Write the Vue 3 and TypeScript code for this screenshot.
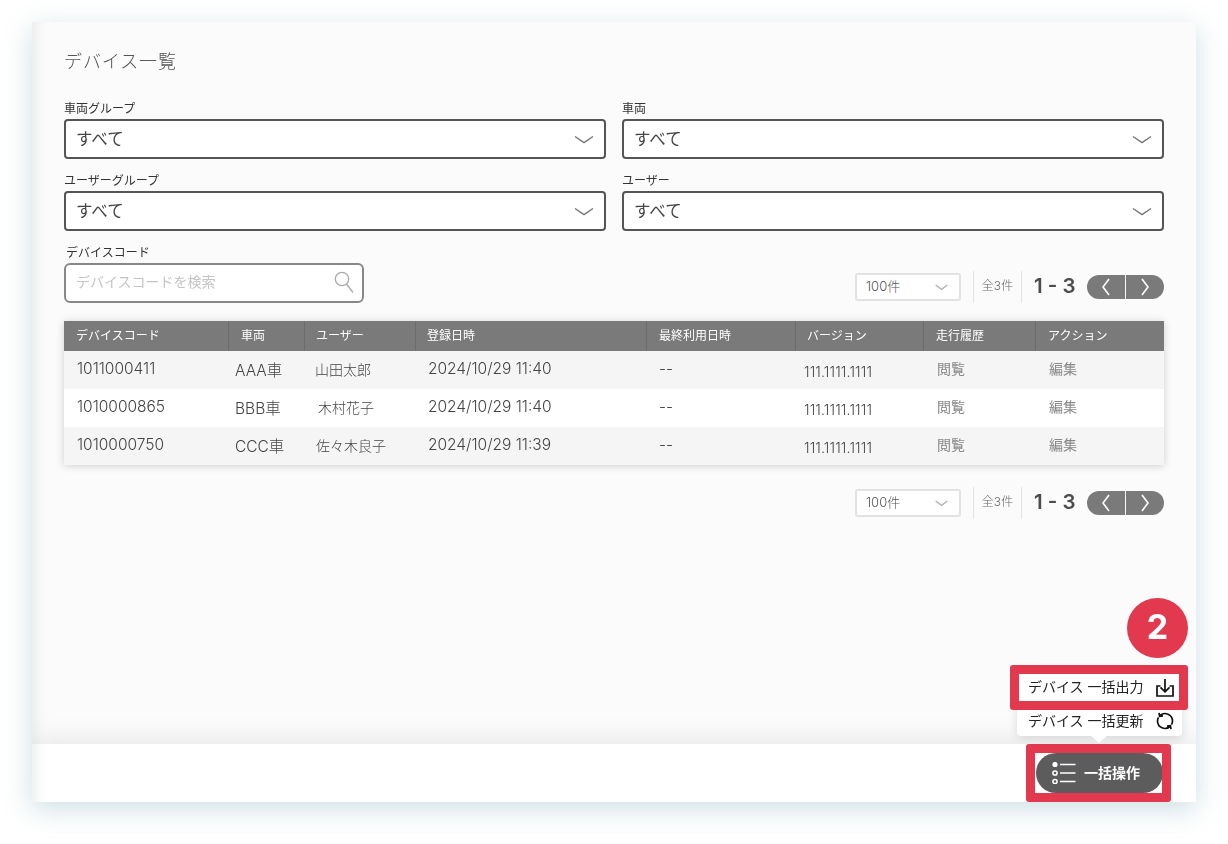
<script setup lang="ts">
interface Row { code: string; car: string; user: string; date: string; userClass: string }
const rows: Row[] = [
  { code: '1011000411', car: 'AAA車', user: '山田太郎', date: '2024/10/29 11:40', userClass: 'u0' },
  { code: '1010000865', car: 'BBB車', user: '木村花子', date: '2024/10/29 11:40', userClass: 'u1' },
  { code: '1010000750', car: 'CCC車', user: '佐々木良子', date: '2024/10/29 11:39', userClass: 'u2' },
]
const headers = ['デバイスコード', '車両', 'ユーザー', '登録日時', '最終利用日時', 'バージョン', '走行履歴', 'アクション']
const filters = ['車両グループ', '車両', 'ユーザーグループ', 'ユーザー']
</script>

<template>
  <div class="page">
    <div class="card">
      <main class="main">
        <h1 class="title">デバイス一覧</h1>
        <div class="filters">
          <div v-for="f in filters" :key="f" class="field">
            <label class="label">{{ f }}</label>
            <div class="select">
              <span class="value">すべて</span>
              <svg class="chev" width="20" height="10" viewBox="0 0 20 10" fill="none"><path d="M1 1.5 10 7.5 19 1.5" stroke="#777" stroke-width="1.5" /></svg>
            </div>
          </div>
        </div>
        <div class="search-row">
          <div class="field search-field">
            <label class="label code-label">デバイスコード</label>
            <div class="search">
              <span class="ph">デバイスコードを検索</span>
              <svg class="glass" width="20" height="24" viewBox="0 0 20 24" fill="none" stroke="#aaa" stroke-width="1.3"><circle cx="8" cy="9" r="6.7" /><path d="M12.5 14 19 22.5" /></svg>
            </div>
          </div>
          <div class="pager pager-top">
            <div class="size"><span class="size-text">100件</span><svg width="13" height="7" viewBox="0 0 13 7" fill="none"><path d="M.7 1 6.5 5.500 12.300 1" stroke="#aaa" stroke-width="1.2" /></svg></div>
            <div class="total">全3件</div>
            <div class="range">1 - 3</div>
            <div class="nav">
              <span class="nav-btn"><svg width="10" height="18" viewBox="0 0 10 18" fill="none"><path d="M8 1 2 9l6 8" stroke="#fff" stroke-width="1.6" /></svg></span>
              <span class="nav-btn"><svg width="10" height="18" viewBox="0 0 10 18" fill="none"><path d="M2 1l6 8-6 8" stroke="#fff" stroke-width="1.6" /></svg></span>
            </div>
          </div>
        </div>
        <div class="table">
          <div class="thead">
            <div v-for="(h, i) in headers" :key="h" class="th" :class="'h' + i">{{ h }}</div>
          </div>
          <div v-for="r in rows" :key="r.code" class="tr">
            <div class="td c0">{{ r.code }}</div>
            <div class="td c1">{{ r.car }}</div>
            <div class="td c2" :class="r.userClass">{{ r.user }}</div>
            <div class="td c3">{{ r.date }}</div>
            <div class="td c4">--</div>
            <div class="td c5">111.1111.1111</div>
            <div class="td c6">閲覧</div>
            <div class="td c7">編集</div>
          </div>
        </div>
        <div class="pager pager-bottom">
          <div class="size"><span class="size-text">100件</span><svg width="13" height="7" viewBox="0 0 13 7" fill="none"><path d="M.7 1 6.5 5.500 12.300 1" stroke="#aaa" stroke-width="1.2" /></svg></div>
          <div class="total">全3件</div>
          <div class="range">1 - 3</div>
          <div class="nav">
            <span class="nav-btn"><svg width="10" height="18" viewBox="0 0 10 18" fill="none"><path d="M8 1 2 9l6 8" stroke="#fff" stroke-width="1.6" /></svg></span>
            <span class="nav-btn"><svg width="10" height="18" viewBox="0 0 10 18" fill="none"><path d="M2 1l6 8-6 8" stroke="#fff" stroke-width="1.6" /></svg></span>
          </div>
        </div>
      </main>
      <footer class="footer">
        <button class="bulk" type="button">
          <svg width="24" height="22" viewBox="0 0 24 22" fill="none" stroke="#fff" stroke-width="1.5">
            <circle cx="3" cy="2.500" r="2.600" fill="#fff" stroke="none" />
            <circle cx="3" cy="11" r="2.100" />
            <circle cx="3" cy="19.500" r="2.100" />
            <path d="M8 2.500h15.500M8 11h15.500M8 19.500h15.500" />
          </svg>
          <span class="bulk-text">一括操作</span>
          <i class="mark mark-btn"></i>
        </button>
      </footer>

      <div class="menu">
        <div class="menu-item first">
          <span class="item-text">デバイス 一括出力</span>
          <svg width="18" height="18" viewBox="0 0 18 18" fill="none" stroke="#111" stroke-width="1.7"><path d="M4.500 7H1v10h16V7h-3.500" /><path d="M9 0v12.500M4.500 8.300 9 12.800l4.500-4.500" /></svg>
          <i class="mark mark-item"></i>
        </div>
        <div class="menu-item second">
          <span class="item-text">デバイス 一括更新</span>
          <svg width="18" height="18" viewBox="0 0 18 18" fill="none" stroke="#111" stroke-width="1.7"><path d="M4 3.500A7.500 7.500 0 0 1 16.500 9a7.500 7.500 0 0 1-1 3.700" /><path d="M14 14.500A7.500 7.500 0 0 1 1.500 9a7.500 7.500 0 0 1 1-3.700" /><path d="M3 .8l.6 3.400L7 3.800M15 17.200l-.6-3.400-3.400.4" /></svg>
        </div>
        <div class="arrow"></div>
      </div>
      <div class="badge">2</div>
    </div>
  </div>
</template>

<style>
html, body { margin: 0; background: #fff; }
</style>

<style scoped>
.page {
  box-sizing: border-box;
  width: 1228px;
  height: 844px;
  padding: 22px 32px 42px;
  font-family: Inter, "Noto Sans CJK JP", sans-serif;
  color: #4f4f4f;
  overflow: hidden;
  will-change: opacity;
}
.card {
  position: relative;
  height: 780px;
  display: flex;
  flex-direction: column;
  background: #fbfbfb;
  box-shadow: 0 7px 26px rgba(90, 150, 168, .3), inset 16px 0 14px -12px rgba(0, 0, 0, .07);
  overflow: clip;
  overflow-clip-margin: 0;
}
.main { flex: 1; padding: 0 32px; }
.title {
  margin: 0;
  padding-top: 27px;
  font-size: 18px;
  line-height: 25px;
  font-weight: 300;
  letter-spacing: .9px;
  color: #555;
}
.filters {
  margin-top: 25px;
  display: grid;
  grid-template-columns: 1fr 1fr;
  column-gap: 16px;
  row-gap: 12px;
}
.field { display: flex; flex-direction: column; }
.label {
  height: 20px;
  line-height: 20px;
  font-size: 12px;
  color: #333;
}
.code-label { padding-left: 2px; }
.select {
  box-sizing: border-box;
  height: 40px;
  background: #fff;
  border: 2px solid #555;
  border-radius: 4px;
  padding: 0 10px;
  display: flex;
  align-items: center;
  justify-content: space-between;
  font-size: 16.5px;
  color: #444;
}
.value { margin-top: -3px; }
.chev { margin-top: 2px; }
.search-row {
  margin-top: 12px;
  display: flex;
  justify-content: space-between;
  align-items: flex-end;
}
.search-field { width: 300px; }
.search {
  box-sizing: border-box;
  height: 40px;
  background: #fff;
  border: 2px solid #888;
  border-radius: 6px;
  padding: 0 8px 0 10px;
  display: flex;
  align-items: center;
  justify-content: space-between;
  font-size: 14px;
  color: #c4c4c4;
}
.ph { margin-top: -4px; }
.glass { margin-top: -2px; }
.pager {
  display: flex;
  align-items: center;
  height: 32px;
}
.pager-bottom { margin-top: 22px; justify-content: flex-end; }
.size {
  box-sizing: border-box;
  width: 106px;
  height: 28px;
  background: #fff;
  border: 2px solid #e2e2e2;
  border-radius: 3px;
  padding: 0 11px 0 9px;
  display: flex;
  align-items: center;
  justify-content: space-between;
  font-size: 13px;
  font-weight: 300;
  color: #555;
}
.size-text { margin-top: -3px; }
.total {
  margin-left: 12px;
  width: 49px;
  height: 32px;
  box-sizing: border-box;
  border-left: 1px solid #e2e2e2;
  border-right: 1px solid #e2e2e2;
  text-align: center;
  line-height: 30px;
  font-size: 12px;
  font-weight: 300;
  color: #666;
}
.range {
  margin-left: 12px;
  width: 53px;
  font-size: 20.5px;
  font-weight: 600;
  color: #4c4c4c;
  white-space: nowrap;
  margin-top: -3px;
}
.nav {
  width: 77px;
  height: 24px;
  display: flex;
  gap: 1px;
  border-radius: 12px;
  overflow: hidden;
}
.nav-btn {
  flex: 1;
  background: #7a7a7a;
  display: flex;
  align-items: center;
  justify-content: center;
}
.table {
  margin-top: 18px;
  box-shadow: 0 1px 8px rgba(0, 0, 0, .18);
}
.thead, .tr {
  display: grid;
  grid-template-columns: 164px 76px 111px 231px 149px 128px 112px 129px;
}
.thead { height: 30px; background: #7a7a7a; }
.th {
  line-height: 29px;
  font-size: 12px;
  color: #fff;
  padding-left: 12px;
  border-left: 1px solid #6c6c6c;
}
.th:first-child { border-left: none; }
.h2, .h3, .h5 { padding-left: 11px; }
.tr { height: 38px; background: #f5f5f5; align-items: center; font-size: 15.5px; font-weight: 300; color: #444; }
.tr:nth-child(odd) { background: #fff; }
.td { padding-left: 13px; white-space: nowrap; margin-top: -4px; }
.c1 { padding-left: 7px; margin-top: -3px; }
.c2 { margin-top: -3px; font-size: 14px; }
.u0 { padding-left: 11px; }
.u1 { padding-left: 14px; }
.u2 { padding-left: 12px; }
.c5 { padding-left: 9px; margin-top: 3px; font-size: 14px; letter-spacing: .15px; }
.c6, .c7 { color: #888; padding-left: 14px; font-size: 14px; margin-top: -5px; font-weight: 400; }
.footer {
  height: 58px;
  background: #fff;
  box-shadow: 0 0 30px rgba(0, 0, 0, .11), inset 16px 0 14px -12px rgba(0, 0, 0, .07);
  display: flex;
  justify-content: flex-end;
  padding: 9px 33px 0 0;
  box-sizing: border-box;
  position: relative;
}
.bulk {
  position: relative;
  box-sizing: border-box;
  width: 127px;
  height: 40px;
  border: none;
  border-radius: 20px;
  background: #5c5c5c;
  color: #fff;
  font-family: inherit;
  font-size: 14px;
  font-weight: 700;
  display: flex;
  align-items: center;
  gap: 8px;
  padding: 0 0 0 16px;
}
.bulk-text { margin-top: -3px; }
.mark {
  position: absolute;
  border: 9px solid #e2394f;
  border-radius: 3px;
  pointer-events: none;
}
.mark-btn { inset: -9px -8px -9px -10px; }
.mark-item { inset: -9px -6px -9px -7px; }
.menu {
  position: absolute;
  left: 985px;
  top: 651px;
  width: 165px;
  background: #fff;
  border-radius: 4px;
  box-shadow: 0 2px 10px rgba(0, 0, 0, .12);
}
.menu-item {
  position: relative;
  display: flex;
  align-items: center;
  justify-content: space-between;
  padding: 0 8px 0 11px;
  font-size: 14px;
  color: #222;
}
.item-text { margin-top: -3px; }
.first { margin: 1px 0 3px; height: 27px; }
.second { height: 32px; padding-top: 2px; box-sizing: border-box; }
.second .item-text { margin-top: -2px; }
.arrow {
  position: absolute;
  left: 73px;
  bottom: -7px;
  width: 0;
  height: 0;
  border-left: 9px solid transparent;
  border-right: 9px solid transparent;
  border-top: 8px solid #fff;
}
.badge {
  position: absolute;
  left: 1095px;
  top: 576px;
  width: 61px;
  height: 60px;
  border-radius: 50%;
  background: #e2394f;
  color: #fff;
  font-size: 34px;
  font-weight: 700;
  text-align: center;
  line-height: 58px;
}
</style>
